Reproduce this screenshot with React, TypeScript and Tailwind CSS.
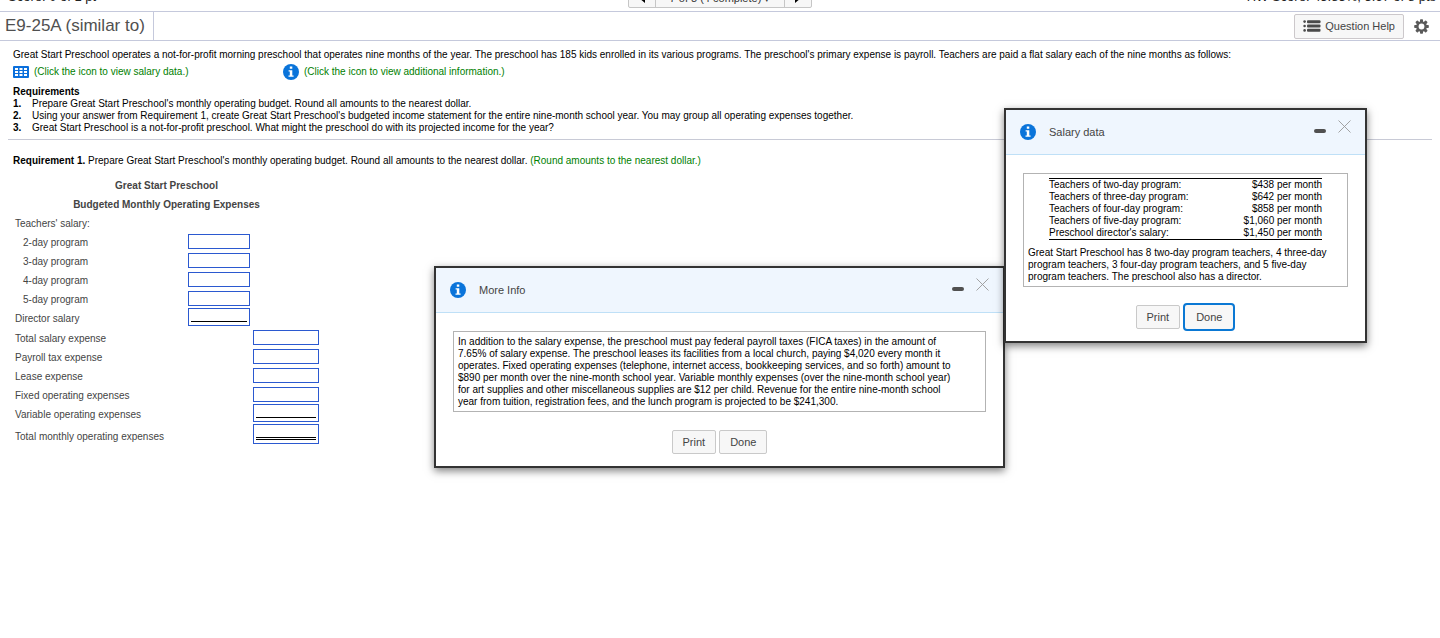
import { useId, useState } from "react"
import type { ReactNode } from "react"

type BudgetRow = {
  label: string
  column?: 1 | 2
  indent?: boolean
  rule?: "single" | "double"
}

const budgetRows: BudgetRow[] = [
  { label: "Teachers' salary:" },
  { label: "2-day program", column: 1, indent: true },
  { label: "3-day program", column: 1, indent: true },
  { label: "4-day program", column: 1, indent: true },
  { label: "5-day program", column: 1, indent: true },
  { label: "Director salary", column: 1, rule: "single" },
  { label: "Total salary expense", column: 2 },
  { label: "Payroll tax expense", column: 2 },
  { label: "Lease expense", column: 2 },
  { label: "Fixed operating expenses", column: 2 },
  { label: "Variable operating expenses", column: 2, rule: "single" },
  { label: "Total monthly operating expenses", column: 2, rule: "double" },
]

const salaries = [
  ["Teachers of two-day program:", "$438 per month"],
  ["Teachers of three-day program:", "$642 per month"],
  ["Teachers of four-day program:", "$858 per month"],
  ["Teachers of five-day program:", "$1,060 per month"],
  ["Preschool director's salary:", "$1,450 per month"],
]

const requirements = [
  "Prepare Great Start Preschool's monthly operating budget. Round all amounts to the nearest dollar.",
  "Using your answer from Requirement 1, create Great Start Preschool's budgeted income statement for the entire nine-month school year. You may group all operating expenses together.",
  "Great Start Preschool is a not-for-profit preschool. What might the preschool do with its projected income for the year?",
]

function InfoIcon() {
  return (
    <svg viewBox="0 0 16 16" className="h-4 w-4 shrink-0" aria-hidden="true">
      <circle cx="8" cy="8" r="8" fill="#0a74da" />
      <path d="M6.8 2.6h2.5v2.1H6.8zM5.6 6.2h3.7v5.2h1.3v1.4H5.5v-1.4h1.3V7.6H5.6z" fill="#fff" />
    </svg>
  )
}

function TableIcon() {
  return (
    <svg viewBox="0 0 16 12" className="h-3 w-4 shrink-0" aria-hidden="true">
      <rect width="16" height="12" rx="1" fill="#0a6fdc" />
      <path
        d="M2 2h3v2H2zM6.5 2h3v2h-3zM11 2h3v2h-3zM2 5h3v2H2zM6.5 5h3v2h-3zM11 5h3v2h-3zM2 8h3v2H2zM6.5 8h3v2h-3zM11 8h3v2h-3z"
        fill="#fff"
      />
    </svg>
  )
}

function ListIcon() {
  return (
    <svg viewBox="0 0 18 12" className="h-3 w-[18px]" fill="#4a4a4a" aria-hidden="true">
      <circle cx="1.6" cy="1.6" r="1.3" />
      <circle cx="1.6" cy="6" r="1.3" />
      <circle cx="1.6" cy="10.4" r="1.3" />
      <rect x="4" y="0.2" width="13.5" height="3" rx="1" />
      <rect x="4" y="4.5" width="13.5" height="3" rx="1" />
      <rect x="4" y="8.8" width="13.5" height="3" rx="1" />
    </svg>
  )
}

function GearIcon() {
  return (
    <svg viewBox="0 0 16 16" className="h-[15px] w-[15px]" aria-hidden="true">
      <g fill="#5a5a5a">
        <rect x="6.4" y="0.2" width="3.2" height="15.6" rx="0.8" />
        <rect x="6.4" y="0.2" width="3.2" height="15.6" rx="0.8" transform="rotate(45 8 8)" />
        <rect x="6.4" y="0.2" width="3.2" height="15.6" rx="0.8" transform="rotate(90 8 8)" />
        <rect x="6.4" y="0.2" width="3.2" height="15.6" rx="0.8" transform="rotate(135 8 8)" />
        <circle cx="8" cy="8" r="5.7" />
      </g>
      <circle cx="8" cy="8" r="3.1" fill="#fff" />
    </svg>
  )
}

function DialogButton({ children, focused = false }: { children: ReactNode; focused?: boolean }) {
  return (
    <button
      type="button"
      className={
        focused
          ? "h-7 rounded border-2 border-[#0a78d4] bg-[#f7f7f7] px-[11px] text-[11px] text-[#444]"
          : "h-6 rounded-xs border border-[#c9c9c9] bg-[#f7f7f7] px-2.5 text-[11px] text-[#444]"
      }
    >
      {children}
    </button>
  )
}

type DialogProps = {
  title: string
  className: string
  focusDone?: boolean
  children: ReactNode
}

function Dialog({ title, className, focusDone, children }: DialogProps) {
  const [open, setOpen] = useState(true)
  const titleId = useId()

  if (!open) return null

  return (
    <section
      role="dialog"
      aria-labelledby={titleId}
      className={`absolute border-2 border-[#333] bg-white shadow-[0_3px_8px_rgba(0,0,0,0.5)] ${className}`}
    >
      <header className="flex h-[45px] items-center border-b border-[#bfe0f7] bg-[#eff6fe] px-3.5">
        <InfoIcon />
        <h2 id={titleId} className="ml-[13px] flex-1 text-[11px] text-[#444]">
          {title}
        </h2>
        <div className="flex gap-3 pb-3">
          <button type="button" aria-label="Minimize" className="flex h-3.5 w-3 items-end">
            <span className="h-1 w-full rounded-xs bg-[#505050]" />
          </button>
          <button type="button" aria-label="Close" onClick={() => setOpen(false)}>
            <svg viewBox="0 0 13 13" className="h-[13px] w-[13px]" aria-hidden="true">
              <path d="M0.5 0.5l12 12M12.5 0.5l-12 12" stroke="#999" strokeWidth="0.9" />
            </svg>
          </button>
        </div>
      </header>
      <div className="px-[17px] pt-[18px] pb-2.5">
        <div className="border border-[#b3b3b3] px-1 pt-1 pb-[3px] text-[10px] leading-3 text-black">{children}</div>
        <footer className="mt-4 flex h-7 items-center justify-center gap-[3px]">
          <DialogButton>Print</DialogButton>
          <DialogButton focused={focusDone}>Done</DialogButton>
        </footer>
      </div>
    </section>
  )
}

function BudgetInput({ id, column, rule }: { id: string; column: 1 | 2; rule?: "single" | "double" }) {
  return (
    <div
      className={`flex flex-col border border-[#2b59d0] ${column === 1 ? "w-[62px]" : "w-[66px]"} ${
        rule === "double" ? "h-5 px-0.5 pb-[3px]" : rule === "single" ? "h-[18px] px-0.5 pb-[3px]" : "h-[15px]"
      }`}
    >
      <input
        id={id}
        type="text"
        className={`min-h-0 w-full flex-1 text-[10px] outline-none ${
          rule === "double" ? "border-b-3 border-double border-black" : rule === "single" ? "border-b border-black" : ""
        }`}
      />
    </div>
  )
}

export default function App() {
  return (
    <div className="relative min-h-screen overflow-hidden bg-white font-['Liberation_Sans',Arial,sans-serif] text-[10px] leading-3 text-black">
      {/* Score strip, scrolled mostly out of view */}
      <div className="grid h-[11px] grid-cols-[1fr_auto_1fr] grid-rows-[11px] items-end overflow-hidden px-1 text-[13px] text-[#222]">
        <span className="pb-2 pl-1 leading-3">Score: 0 of 1 pt</span>
        <nav
          aria-label="Questions"
          className="mb-[3px] flex h-5 rounded-xs border border-[#c6c6c6] bg-[#f7f7f7] text-[11px] leading-3 text-[#333]"
        >
          <button type="button" aria-label="Previous question" className="flex w-[27px] items-center justify-center border-r border-[#c6c6c6]">
            <svg viewBox="0 0 6 10" className="h-2.5 w-1.5" aria-hidden="true">
              <path d="M6 0v10L0 5z" fill="#000" />
            </svg>
          </button>
          <button type="button" className="w-32">
            7 of 8 (4 complete) ▾
          </button>
          <button type="button" aria-label="Next question" className="flex w-[27px] items-center justify-center border-l border-[#c6c6c6]">
            <svg viewBox="0 0 6 10" className="h-2.5 w-1.5" aria-hidden="true">
              <path d="M0 0v10l6-5z" fill="#000" />
            </svg>
          </button>
        </nav>
        <span className="pb-2 text-right leading-3">HW Score: 45.83%, 3.67 of 8 pts</span>
      </div>

      <header className="flex h-[30px] items-center justify-between border-y border-[#c5c9dc] pr-[11px]">
        <h1 className="flex h-full items-center border-r border-[#c5c9dc] pr-2 pl-[5px] text-[17px] text-[#505050]">
          E9-25A (similar to)
        </h1>
        <div className="flex items-center gap-2.5">
          <button
            type="button"
            className="flex h-[25px] items-center gap-1 rounded-xs border border-[#ccc8cb] bg-[#f7f7f7] px-2 text-[11px] text-[#444]"
          >
            <ListIcon />
            Question Help
          </button>
          <button type="button" aria-label="Settings">
            <GearIcon />
          </button>
        </div>
      </header>

      <main className="px-2">
        <section className="border-b border-[#c8cad6] pt-2 pb-[5px] pl-[5px]">
          <p>
            Great Start Preschool operates a not-for-profit morning preschool that operates nine months of the year. The
            preschool has 185 kids enrolled in its various programs. The preschool's primary expense is payroll.
            Teachers are paid a flat salary each of the nine months as follows:
          </p>
          <div className="mt-[3px] flex h-4 items-center text-[#008000]">
            <button type="button" className="flex w-[270px] items-center gap-[5px] text-left">
              <TableIcon />
              (Click the icon to view salary data.)
            </button>
            <button type="button" className="flex items-center gap-[5px]">
              <InfoIcon />
              (Click the icon to view additional information.)
            </button>
          </div>
          <h2 className="mt-1.5 font-bold">Requirements</h2>
          <ol>
            {requirements.map((text, i) => (
              <li key={text} className="flex">
                <span className="w-[19px] shrink-0 font-bold">{i + 1}.</span>
                {text}
              </li>
            ))}
          </ol>
        </section>

        <section className="pt-[15px] pl-[5px]">
          <p>
            <b>Requirement 1.</b> Prepare Great Start Preschool's monthly operating budget. Round all amounts to the
            nearest dollar. <span className="text-[#008000]">(Round amounts to the nearest dollar.)</span>
          </p>

          <table className="mt-[9px] text-[#444]">
            <caption className="font-bold leading-[19px]">
              Great Start Preschool
              <br />
              Budgeted Monthly Operating Expenses
            </caption>
            <tbody>
              {budgetRows.map(({ label, column, indent, rule }, i) => (
                <tr
                  key={label}
                  className={rule === "double" ? "h-6" : rule ? "h-5" : column ? "h-[19px]" : "h-[18px]"}
                >
                  <th
                    scope="row"
                    className={`w-[175px] pt-0.5 text-left font-normal whitespace-nowrap ${indent ? "pl-2.5" : "pl-0.5"}`}
                  >
                    {column ? <label htmlFor={`budget-${i}`}>{label}</label> : label}
                  </th>
                  <td className={`w-[65px] p-0 ${rule ? "align-top" : "align-middle"}`}>
                    {column === 1 && <BudgetInput id={`budget-${i}`} column={1} rule={rule} />}
                  </td>
                  <td className={`w-[67px] p-0 ${rule ? "align-top" : "align-middle"}`}>
                    {column === 2 && <BudgetInput id={`budget-${i}`} column={2} rule={rule} />}
                  </td>
                </tr>
              ))}
            </tbody>
          </table>
        </section>
      </main>

      <Dialog title="More Info" className="top-[266px] left-[434px] w-[571px]">
        <p className="pr-6">
          In addition to the salary expense, the preschool must pay federal payroll taxes (FICA taxes) in the amount of
          7.65% of salary expense. The preschool leases its facilities from a local church, paying $4,020 every month it
          operates. Fixed operating expenses (telephone, internet access, bookkeeping services, and so forth) amount to
          $890 per month over the nine-month school year. Variable monthly expenses (over the nine-month school year)
          for art supplies and other miscellaneous supplies are $12 per child. Revenue for the entire nine-month school
          year from tuition, registration fees, and the lunch program is projected to be $241,300.
        </p>
      </Dialog>

      <Dialog title="Salary data" className="top-[108px] left-[1004px] w-[363px]" focusDone>
        <table className="mx-auto w-[273px] border-y border-black">
          <tbody>
            {salaries.map(([role, pay]) => (
              <tr key={role}>
                <th scope="row" className="p-0 text-left font-normal">
                  {role}
                </th>
                <td className="p-0 text-right">{pay}</td>
              </tr>
            ))}
          </tbody>
        </table>
        <p className="mt-[7px]">
          Great Start Preschool has 8 two-day program teachers, 4 three-day program teachers, 3 four-day program
          teachers, and 5 five-day program teachers. The preschool also has a director.
        </p>
      </Dialog>
    </div>
  )
}
